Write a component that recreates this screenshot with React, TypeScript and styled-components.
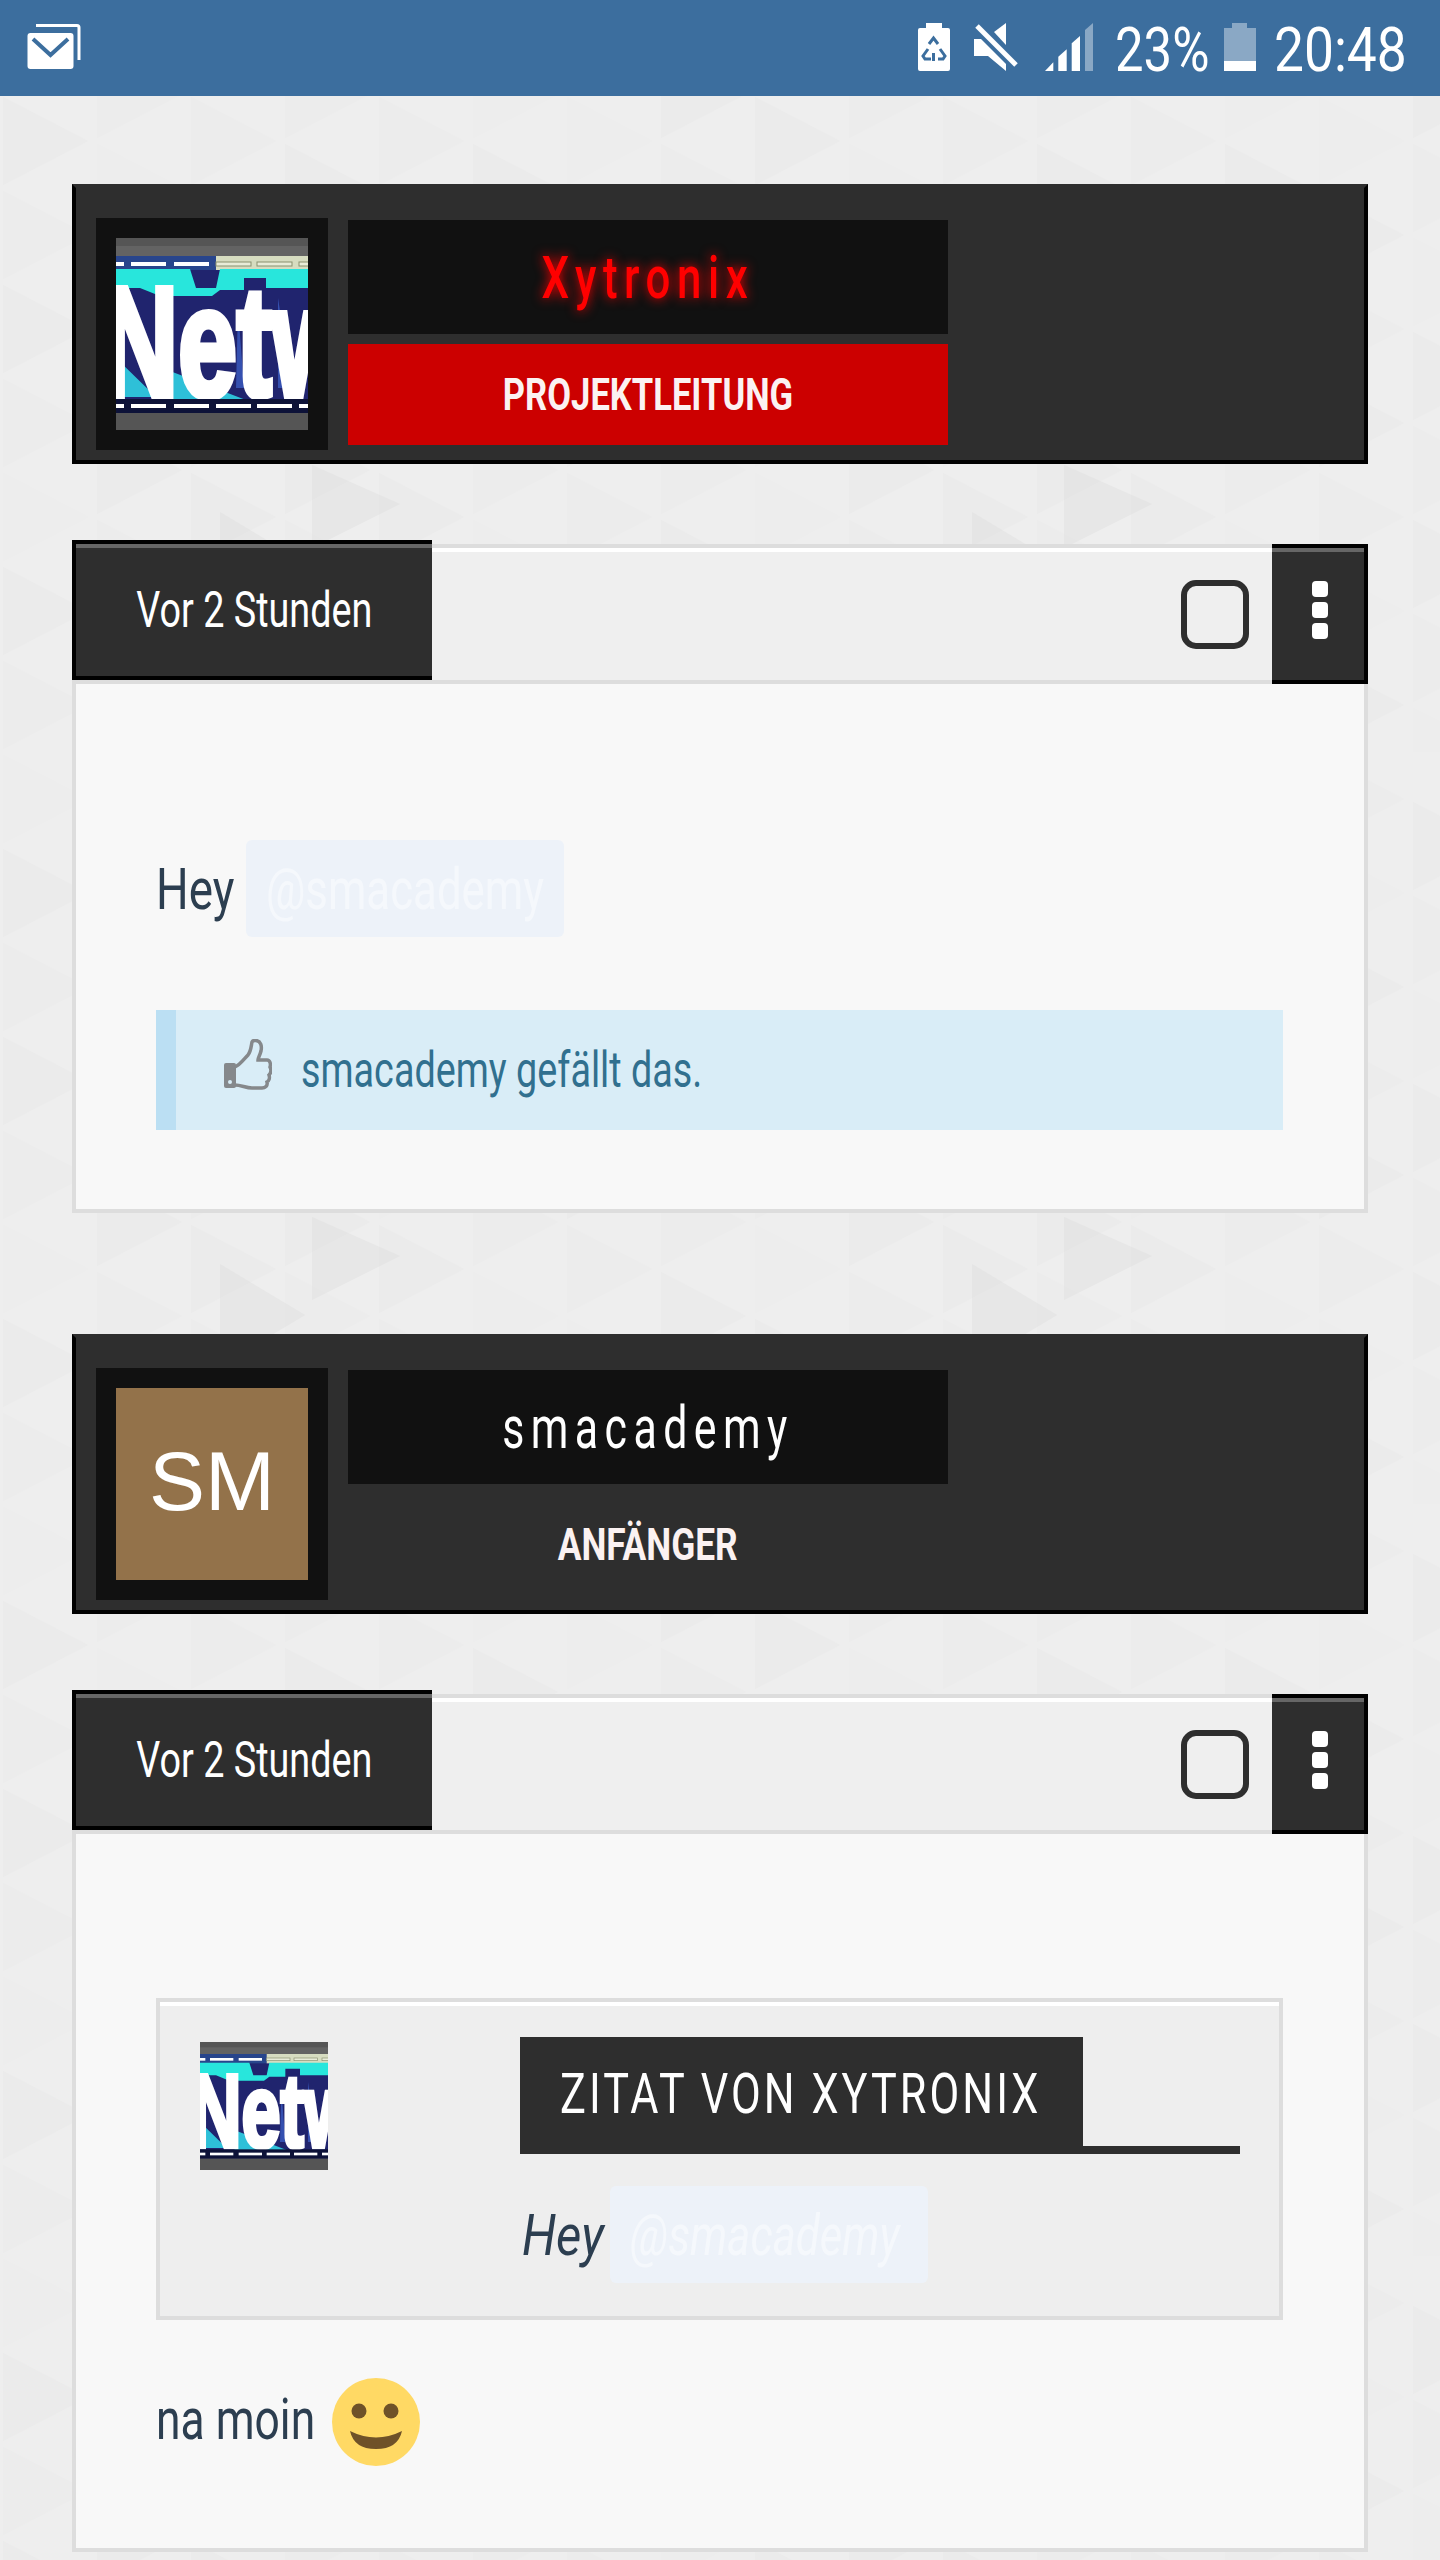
import React from 'react';
import styled, { createGlobalStyle } from 'styled-components';

// faint triangle wallpaper, one 752px tile
const buildTile = () => {
    let shapes = '';
    for (let col = 0; col < 8; col++) {
        for (let row = 0; row < 8; row++) {
            const x = col * 94;
            const y = row * 94 + (col % 2) * 47;
            const alpha = 0.004 + ((col * 7 + row * 13) % 5) * 0.002;
            shapes += `<path d="M${x + 3} ${y + 3}L${x + 88} ${y + 47}L${x + 3} ${y + 91}Z" fill="#000" fill-opacity="${alpha}"/>`;
        }
    }
    shapes += '<path d="M312 465L400 504L312 548Z" fill="#000" fill-opacity=".026"/>';
    shapes += '<path d="M220 512L305 563L220 614Z" fill="#000" fill-opacity=".026"/>';
    const svg = `<svg xmlns="http://www.w3.org/2000/svg" width="752" height="752">${shapes}</svg>`;
    return `url("data:image/svg+xml,${encodeURIComponent(svg)}")`;
};

const GlobalStyle = createGlobalStyle`
    html, body {
        margin: 0;
        padding: 0;
    }
    body {
        background-color: #eeeeee;
        background-image: ${buildTile()};
        font-family: Roboto, "Liberation Sans", sans-serif;
    }
    * {
        box-sizing: border-box;
    }
`;

const Page = styled.div`
    width: 1440px;
    min-height: 2560px;
    display: flex;
    flex-direction: column;
`;

const StatusBar = styled.header`
    height: 96px;
    background: #3c6e9e;
    display: flex;
    align-items: flex-start;
    padding: 23px 37px 0 27px;
    color: #fff;
`;

const StatusRight = styled.div`
    margin-left: auto;
    display: flex;
    align-items: flex-start;
`;

const StatusIcon = styled.svg<{ $gap: number }>`
    display: block;
    margin-left: ${({ $gap }) => $gap}px;
`;

const StatusText = styled.div<{ $width: number; $gap: number }>`
    width: ${({ $width }) => $width}px;
    margin-left: ${({ $gap }) => $gap}px;
    height: 48px;
    font-size: 62px;
    font-weight: 400;
    line-height: 54px;
    white-space: nowrap;
`;

const Squeeze = styled.span<{ $x: number; $origin?: string }>`
    display: inline-block;
    white-space: nowrap;
    transform: scaleX(${({ $x }) => $x});
    transform-origin: ${({ $origin }) => $origin || 'left'} center;
`;

const Main = styled.main`
    padding: 88px 72px 8px;
    display: flex;
    flex-direction: column;
`;

const UserCard = styled.section<{ $first?: boolean }>`
    height: 280px;
    margin-top: ${({ $first }) => ($first ? 0 : 121)}px;
    background: #2e2e2e;
    border: 4px solid #000;
    border-top-color: #2e2e2e;
    padding: 30px 20px 0;
    display: flex;
    gap: 20px;
    align-items: flex-start;
`;

const AvatarFrame = styled.div`
    width: 232px;
    height: 232px;
    padding: 20px;
    background: #111;
`;

const LetterAvatar = styled.div`
    width: 192px;
    height: 192px;
    padding-bottom: 6px;
    background: #93724a;
    color: #fff;
    font-family: "Liberation Sans", sans-serif;
    font-size: 84px;
    display: flex;
    align-items: center;
    justify-content: center;
`;

const NameColumn = styled.div`
    width: 600px;
    margin-top: 2px;
    display: flex;
    flex-direction: column;
    gap: 10px;
`;

const NameBox = styled.div<{ $glow?: boolean }>`
    height: 114px;
    background: #111;
    color: ${({ $glow }) => ($glow ? '#ff0000' : '#fff')};
    font-size: 60px;
    font-weight: ${({ $glow }) => ($glow ? 500 : 400)};
    letter-spacing: 9px;
    text-shadow: ${({ $glow }) => ($glow ? '0 0 14px #ff0000' : 'none')};
    display: flex;
    align-items: center;
    justify-content: center;
    padding-top: 1px;
`;

const RoleBox = styled.div<{ $red?: boolean }>`
    height: 101px;
    background: ${({ $red }) => ($red ? '#cc0000' : 'transparent')};
    color: #fbf2f2;
    font-size: 45px;
    font-weight: 700;
    display: flex;
    align-items: center;
    justify-content: center;
`;

const PostBar = styled.div`
    height: 140px;
    margin-top: 80px;
    background: #efefef;
    border: 4px solid #ddd;
    box-shadow: inset 0 4px 0 #fff;
    display: flex;
    align-items: center;
`;

const TimeTab = styled.div`
    width: 360px;
    height: 140px;
    margin: -8px 0 0 -4px;
    align-self: flex-start;
    background: #2e2e2e;
    border: 4px solid #000;
    border-right: 0;
    box-shadow: inset 0 4px 0 #666;
    color: #fff;
    font-size: 50px;
    font-weight: 400;
    display: flex;
    align-items: center;
    justify-content: center;
`;

const CheckBox = styled.div`
    width: 68px;
    height: 69px;
    margin-left: auto;
    margin-right: 23px;
    border: 6px solid #2e2e2e;
    border-radius: 15px;
`;

const MenuButton = styled.div`
    width: 96px;
    height: 140px;
    margin: -4px -4px -4px 0;
    background: #2e2e2e;
    border: 4px solid #000;
    border-left: 0;
    box-shadow: inset 0 4px 0 #666;
    padding: 33px 0 0 40px;
    display: flex;
    flex-direction: column;
    gap: 5px;
`;

const MenuDot = styled.span`
    width: 16px;
    height: 16px;
    border-radius: 4px;
    background: #fff;
`;

const PostBody = styled.div<{ $top: number; $bottom: number }>`
    background: #f8f8f8;
    border: 4px solid #ddd;
    border-top: 0;
    padding: ${({ $top }) => $top}px 81px ${({ $bottom }) => $bottom}px 80px;
`;

const TextLine = styled.div`
    display: flex;
    align-items: center;
    color: #2c3e50;
    font-size: 58px;
    font-weight: 400;
`;

const Word = styled.div<{ $width: number; $italic?: boolean; $lift?: number }>`
    width: ${({ $width }) => $width}px;
    flex: none;
    padding-bottom: ${({ $lift }) => $lift || 0}px;
    padding-left: ${({ $italic }) => ($italic ? 2 : 0)}px;
    font-style: ${({ $italic }) => ($italic ? 'italic' : 'normal')};
`;

const Mention = styled.div<{ $italic?: boolean }>`
    width: 318px;
    height: 97px;
    flex: none;
    padding-left: 20px;
    background: #edf2f9;
    border-radius: 6px;
    color: #f5f8fc;
    font-style: ${({ $italic }) => ($italic ? 'italic' : 'normal')};
    display: flex;
    align-items: center;
`;

const LikeBox = styled.div`
    height: 120px;
    margin-top: 73px;
    background: #d9edf7;
    border-left: 20px solid #bbdff3;
    padding-left: 48px;
    color: #31708f;
    font-size: 50px;
    font-weight: 400;
    display: flex;
    align-items: center;
    gap: 29px;
`;

const ThumbIcon = styled.svg`
    display: block;
    flex: none;
    margin-top: -12px;
`;

const Quote = styled.blockquote`
    margin: 0;
    height: 322px;
    background: #eee;
    border: 4px solid #ddd;
    box-shadow: inset 0 4px 0 #fff;
    padding: 35px 39px 0 40px;
    display: flex;
`;

const QuoteAvatar = styled.div`
    width: 320px;
    flex: none;
    padding-top: 5px;
`;

const QuoteContent = styled.div`
    flex: 1;
`;

const QuoteHead = styled.div`
    border-bottom: 8px solid #2e2e2e;
    margin-bottom: 32px;
`;

const QuoteTitle = styled.div`
    width: 563px;
    height: 109px;
    background: #2e2e2e;
    color: #fff;
    font-size: 56px;
    font-weight: 400;
    letter-spacing: 4px;
    padding: 5px 0 0 40px;
    display: flex;
    align-items: center;
`;

const Reply = styled(TextLine)`
    margin-top: 58px;
`;

const Emoji = styled.svg`
    display: block;
    flex: none;
`;

const LogoBox = styled.svg`
    display: block;
`;

const NetLogo: React.FC<{ size: number }> = ({ size }) => (
    <LogoBox width={size} height={size} viewBox="0 0 192 192">
        <rect width="192" height="192" fill="#555" />
        <rect y="8" width="192" height="10" fill="#636363" />
        <rect y="18" width="192" height="157" fill="#20246e" />
        <rect y="18" width="100" height="14" fill="#28458c" />
        <rect x="100" y="18" width="92" height="14" fill="#d6dcc0" />
        <path d="M0 31H74L80 50H100L104 31H192V50H150V40H128V52H104L96 58H44L24 50H0Z" fill="#28e6dc" />
        <path d="M46 62L58 150L46 159ZM122 70L128 150H120ZM162 60L176 150H162Z" fill="#3550b0" />
        <path d="M0 120L40 159H0ZM46 130L130 162H52Z" fill="#2ec0d8" />
        <g fill="#fff">
            <rect x="0" y="24" width="8" height="4" />
            <rect x="15" y="24" width="35" height="4" />
            <rect x="58" y="24" width="35" height="4" />
        </g>
        <g fill="#e8ecd8" stroke="#89906f" strokeWidth="1">
            <rect x="100" y="24" width="35" height="4" />
            <rect x="141" y="24" width="35" height="4" />
            <rect x="183" y="24" width="12" height="4" />
        </g>
        <text
            x="-14"
            y="158"
            fontFamily="Liberation Sans, sans-serif"
            fontWeight="700"
            fontSize="156"
            fill="#fff"
            stroke="#fff"
            strokeWidth="7"
            textLength="252"
            lengthAdjust="spacingAndGlyphs"
        >
            Netw
        </text>
        <rect y="161" width="192" height="14" fill="#0d1238" />
        <g fill="#fff">
            <rect x="0" y="166" width="8" height="4" />
            <rect x="15" y="166" width="35" height="4" />
            <rect x="58" y="166" width="35" height="4" />
            <rect x="100" y="166" width="35" height="4" />
            <rect x="141" y="166" width="35" height="4" />
            <rect x="183" y="166" width="12" height="4" />
        </g>
        <rect y="175" width="192" height="17" fill="#555" />
    </LogoBox>
);

const Smile: React.FC = () => (
    <Emoji width="88" height="88" viewBox="0 0 88 88">
        <circle cx="44" cy="44" r="44" fill="#ffd964" />
        <circle cx="27" cy="33" r="7.5" fill="#6f5228" />
        <circle cx="59" cy="33" r="7.5" fill="#6f5228" />
        <path d="M18 53Q44 66 70 53Q66 71 44 71Q22 71 18 53Z" fill="#6f5228" />
    </Emoji>
);

const Thumb: React.FC = () => (
    <ThumbIcon width="48" height="51" viewBox="0 0 48 51">
        <rect x="0" y="24" width="12" height="25" rx="2" fill="#85888b" />
        <circle cx="6" cy="43" r="2" fill="#d9edf7" />
        <path
            d="M11 28C16 26 20 20 24 16C27 12 27 8 28 3Q29 1 32 1.500C37 2 38 7 37 12C36 16 34 19 34 21H43C46 21 47 25 46 28C47.500 31 47 34 45 36C46 39 45 42 43 43C44 47 41 49 38 49H28C22 49 17 46 11 46"
            fill="none"
            stroke="#85888b"
            strokeWidth="3.500"
        />
    </ThumbIcon>
);

const PostHeader: React.FC = () => (
    <PostBar>
        <TimeTab>
            <Squeeze $x={0.755} $origin="center">
                Vor 2 Stunden
            </Squeeze>
        </TimeTab>
        <CheckBox />
        <MenuButton>
            <MenuDot />
            <MenuDot />
            <MenuDot />
        </MenuButton>
    </PostBar>
);

const App: React.FC = () => (
    <Page>
        <GlobalStyle />
        <StatusBar>
            <StatusIcon $gap={0} width="54" height="47" viewBox="0 -1 54 47">
                <path d="M9 1.500H50a2 2 0 0 1 2 2V36" fill="none" stroke="#fff" strokeWidth="3" />
                <rect x="0.500" y="9" width="46" height="36" rx="3" fill="#fff" />
                <path d="M6 15L23.500 31L41 15" fill="none" stroke="#3c6e9e" strokeWidth="4" />
            </StatusIcon>
            <StatusRight>
                <StatusIcon $gap={0} width="32" height="48" viewBox="0 0 32 48">
                    <path
                        d="M8 0H24V5H30a2 2 0 0 1 2 2V46a2 2 0 0 1-2 2H2a2 2 0 0 1-2-2V7a2 2 0 0 1 2-2H8Z"
                        fill="#fff"
                    />
                    <g fill="none" stroke="#3c6e9e" strokeWidth="3">
                        <path d="M11 21L15.500 15L20 21" />
                        <path d="M10 26L5 33L7 36H13" />
                        <path d="M22 26L27 33L25 36H20" />
                        <path d="M15.500 30V38" />
                    </g>
                </StatusIcon>
                <StatusIcon $gap={24} width="44" height="48" viewBox="0 0 44 48">
                    <path d="M20 9L32 0V22Z" fill="#fff" />
                    <path d="M0 16H7L32 41V48L14 33H0Z" fill="#fff" />
                    <path d="M3 3L42 42" stroke="#fff" strokeWidth="5" fill="none" />
                </StatusIcon>
                <StatusIcon $gap={27} width="48" height="48" viewBox="0 0 48 48">
                    <path d="M0 48L8.300 39.300V48Z" fill="#fff" />
                    <path d="M13.300 33.700L21.700 26.300V48H13.300Z" fill="#fff" />
                    <path d="M26.700 20.300L35 13V48H26.700Z" fill="#fff" />
                    <path d="M40 7L48 0V48H40Z" fill="#8aa8c5" />
                </StatusIcon>
                <StatusText $width={109} $gap={22}>
                    <Squeeze $x={0.82}>23%</Squeeze>
                </StatusText>
                <StatusIcon $gap={0} width="32" height="48" viewBox="0 0 32 48">
                    <path d="M8 0H23V5H32V38H0V5H8Z" fill="#8aa8c5" />
                    <rect y="38" width="32" height="10" fill="#fff" />
                </StatusIcon>
                <StatusText $width={129} $gap={18}>
                    <Squeeze $x={0.86}>20:48</Squeeze>
                </StatusText>
            </StatusRight>
        </StatusBar>
        <Main>
            <UserCard $first>
                <AvatarFrame>
                    <NetLogo size={192} />
                </AvatarFrame>
                <NameColumn>
                    <NameBox $glow>
                        <Squeeze $x={0.73} $origin="center">
                            Xytronix
                        </Squeeze>
                    </NameBox>
                    <RoleBox $red>
                        <Squeeze $x={0.768} $origin="center">
                            PROJEKTLEITUNG
                        </Squeeze>
                    </RoleBox>
                </NameColumn>
            </UserCard>
            <PostHeader />
            <PostBody $top={156} $bottom={79}>
                <TextLine>
                    <Word $width={90}>
                        <Squeeze $x={0.79}>Hey</Squeeze>
                    </Word>
                    <Mention>
                        <Squeeze $x={0.755}>@smacademy</Squeeze>
                    </Mention>
                </TextLine>
                <LikeBox>
                    <Thumb />
                    <Squeeze $x={0.755}>smacademy gefällt das.</Squeeze>
                </LikeBox>
            </PostBody>

            <UserCard>
                <AvatarFrame>
                    <LetterAvatar>SM</LetterAvatar>
                </AvatarFrame>
                <NameColumn>
                    <NameBox>
                        <Squeeze $x={0.715} $origin="center">
                            smacademy
                        </Squeeze>
                    </NameBox>
                    <RoleBox>
                        <Squeeze $x={0.784} $origin="center">
                            ANFÄNGER
                        </Squeeze>
                    </RoleBox>
                </NameColumn>
            </UserCard>
            <PostHeader />
            <PostBody $top={164} $bottom={82}>
                <Quote>
                    <QuoteAvatar>
                        <NetLogo size={128} />
                    </QuoteAvatar>
                    <QuoteContent>
                        <QuoteHead>
                            <QuoteTitle>
                                <Squeeze $x={0.771}>ZITAT VON XYTRONIX</Squeeze>
                            </QuoteTitle>
                        </QuoteHead>
                        <TextLine>
                            <Word $width={90} $italic>
                                <Squeeze $x={0.85}>Hey</Squeeze>
                            </Word>
                            <Mention $italic>
                                <Squeeze $x={0.755}>@smacademy</Squeeze>
                            </Mention>
                        </TextLine>
                    </QuoteContent>
                </Quote>
                <Reply>
                    <Word $width={176} $lift={6}>
                        <Squeeze $x={0.765}>na moin</Squeeze>
                    </Word>
                    <Smile />
                </Reply>
            </PostBody>
        </Main>
    </Page>
);

export default App;
